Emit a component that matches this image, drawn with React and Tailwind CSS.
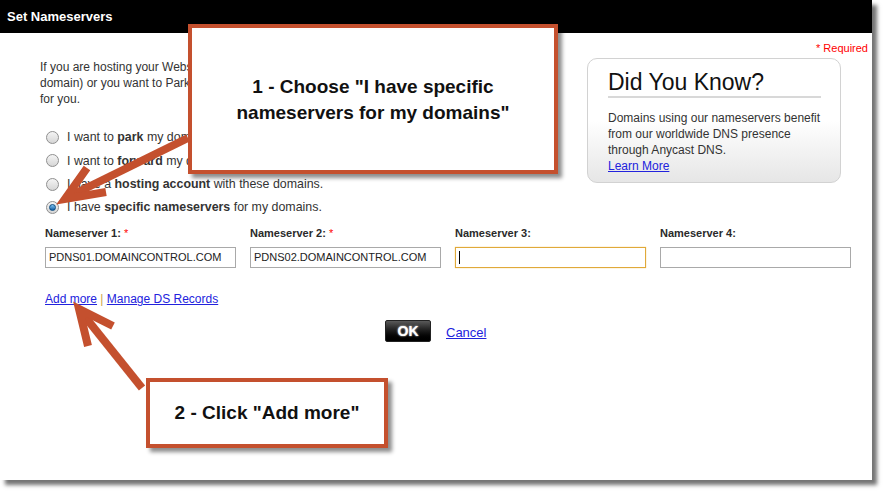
const font = { fontFamily: '"Liberation Sans", Arial, sans-serif' }

function Radio({ checked }) {
  return (
    <span className="relative w-[13px] h-[13px] rounded-full border border-[#8f8f8f] bg-gradient-to-b from-[#f4f4f4] to-[#d6d6d6] flex items-center justify-center shrink-0">
      {checked && (
        <span className="w-[7px] h-[7px] rounded-full bg-gradient-to-b from-[#7fc4f0] to-[#0b5fa5] border border-[#0a4a80]" />
      )}
    </span>
  )
}

function RadioRow({ checked, children }) {
  return (
    <div className="flex items-center gap-[8px] h-[23.3px] text-[12.4px] text-[#333]">
      <Radio checked={checked} />
      <span>{children}</span>
    </div>
  )
}

function NsField({ label, required, value, focused }) {
  return (
    <div className="w-[191px] flex flex-col">
      <div className="h-[14px] leading-[14px] text-[11px] font-bold text-[#2a2a2a]">
        {label}
        {required && <span className="text-[#f00] font-normal"> *</span>}
      </div>
      <div
        className={
          focused
            ? "mt-[7px] h-[21px] border border-[#e0a93a] shadow-[0_0_1px_#f0c060] flex items-center px-[3px]"
            : "mt-[7px] h-[21px] border border-[#a9a9a9] flex items-center px-[3px]"
        }
      >
        {focused ? (
          <span className="w-px h-[13px] bg-black" />
        ) : (
          <span className="text-[11px] text-[#222] leading-none">{value}</span>
        )}
      </div>
    </div>
  )
}

function Callout({ className, children }) {
  return (
    <div
      className={
        "absolute border-[4px] border-[#c4502e] bg-white shadow-[4px_4px_4px_rgba(0,0,0,0.45)] flex items-center justify-center text-center text-[19px] font-bold text-[#111] leading-[26px] " +
        className
      }
    >
      {children}
    </div>
  )
}

export default function App() {
  return (
    <div className="w-[887px] h-[495px] bg-white relative overflow-hidden" style={font}>
      <div className="w-[872px] h-[480px] bg-white shadow-[5px_5px_4px_rgba(0,0,0,0.55)] relative">
        <div className="h-[33px] bg-black flex items-center pl-[7px]">
          <span className="text-white font-bold text-[13px]">Set Nameservers</span>
        </div>

        <div className="flex justify-end pr-[4px] pt-[8px] text-[11px] leading-[14px] text-[#f00]">
          * Required
        </div>

        <div className="flex mt-[3px]">
          <div className="w-[587px] pl-[40px]">
            <div className="text-[12px] leading-[16px] text-[#333] mt-[1px]">
              <div>If you are hosting your Website with another provider (or want to manage DNS for your</div>
              <div>domain) or you want to Park your domains, we can set up the nameservers</div>
              <div>for you.</div>
            </div>
            <div className="pl-[6px] mt-[19px]">
              <RadioRow>
                I want to <b>park</b> my domains.
              </RadioRow>
              <RadioRow>
                I want to <b>forward</b> my domains.
              </RadioRow>
              <RadioRow>
                I have a <b>hosting account</b> with these domains.
              </RadioRow>
              <RadioRow checked>
                I have <b>specific nameservers</b> for my domains.
              </RadioRow>
            </div>
          </div>

          <div className="w-[254px] h-[125px] rounded-[10px] border border-[#d2d2d2] bg-gradient-to-b from-white from-50% to-[#e6e6e6] pl-[20px] pr-[19px] pt-[10px]">
            <div className="text-[23px] leading-[26px] text-[#111]">Did You Know?</div>
            <div className="h-[2px] bg-[#d8d8d8] mt-[1px]" />
            <div className="mt-[12px] text-[12px] leading-[16px] text-[#333]">
              <div>Domains using our nameservers benefit</div>
              <div>from our worldwide DNS presence</div>
              <div>through Anycast DNS.</div>
              <div className="text-[#2222dd] underline">Learn More</div>
            </div>
          </div>
        </div>

        <div className="flex gap-[14px] pl-[45px] mt-[7px]">
          <NsField label="Nameserver 1:" required value="PDNS01.DOMAINCONTROL.COM" />
          <NsField label="Nameserver 2:" required value="PDNS02.DOMAINCONTROL.COM" />
          <NsField label="Nameserver 3:" focused />
          <NsField label="Nameserver 4:" />
        </div>

        <div className="pl-[45px] mt-[24px] text-[12px] leading-[14px]">
          <span className="text-[#2222dd] underline">Add more</span>
          <span className="text-[#c9a24a]"> | </span>
          <span className="text-[#2222dd] underline">Manage DS Records</span>
        </div>

        <div className="flex items-center pl-[385px] mt-[14px] gap-[15px]">
          <div className="w-[46px] h-[22px] rounded-[2px] border border-[#222] bg-gradient-to-b from-[#5a5a5a] via-[#1a1a1a] to-[#000] flex items-center justify-center text-white font-bold text-[14px] [text-shadow:0_0_2px_#fff]">
            OK
          </div>
          <span className="text-[13px] text-[#2222dd] underline mt-[3px]">Cancel</span>
        </div>

        <Callout className="left-[188px] top-[24px] w-[370px] h-[150px]">
          <div className="mt-[2px]">
            1 - Choose "I have specific
            <br />
            nameservers for my domains"
          </div>
        </Callout>

        <Callout className="left-[146px] top-[378px] w-[242px] h-[70px]">
          <div>2 - Click "Add more"</div>
        </Callout>

        <svg className="absolute left-0 top-0 pointer-events-none" width="872" height="480">
          <g stroke="#c4502e" strokeWidth="8" fill="none" strokeLinejoin="miter">
            <line x1="188" y1="138" x2="68" y2="197" />
            <polyline points="87,168 65,199 106,192" />
            <line x1="142" y1="388" x2="82" y2="313" />
            <polyline points="113,326 79,309 88,346" />
          </g>
        </svg>
      </div>
    </div>
  )
}
